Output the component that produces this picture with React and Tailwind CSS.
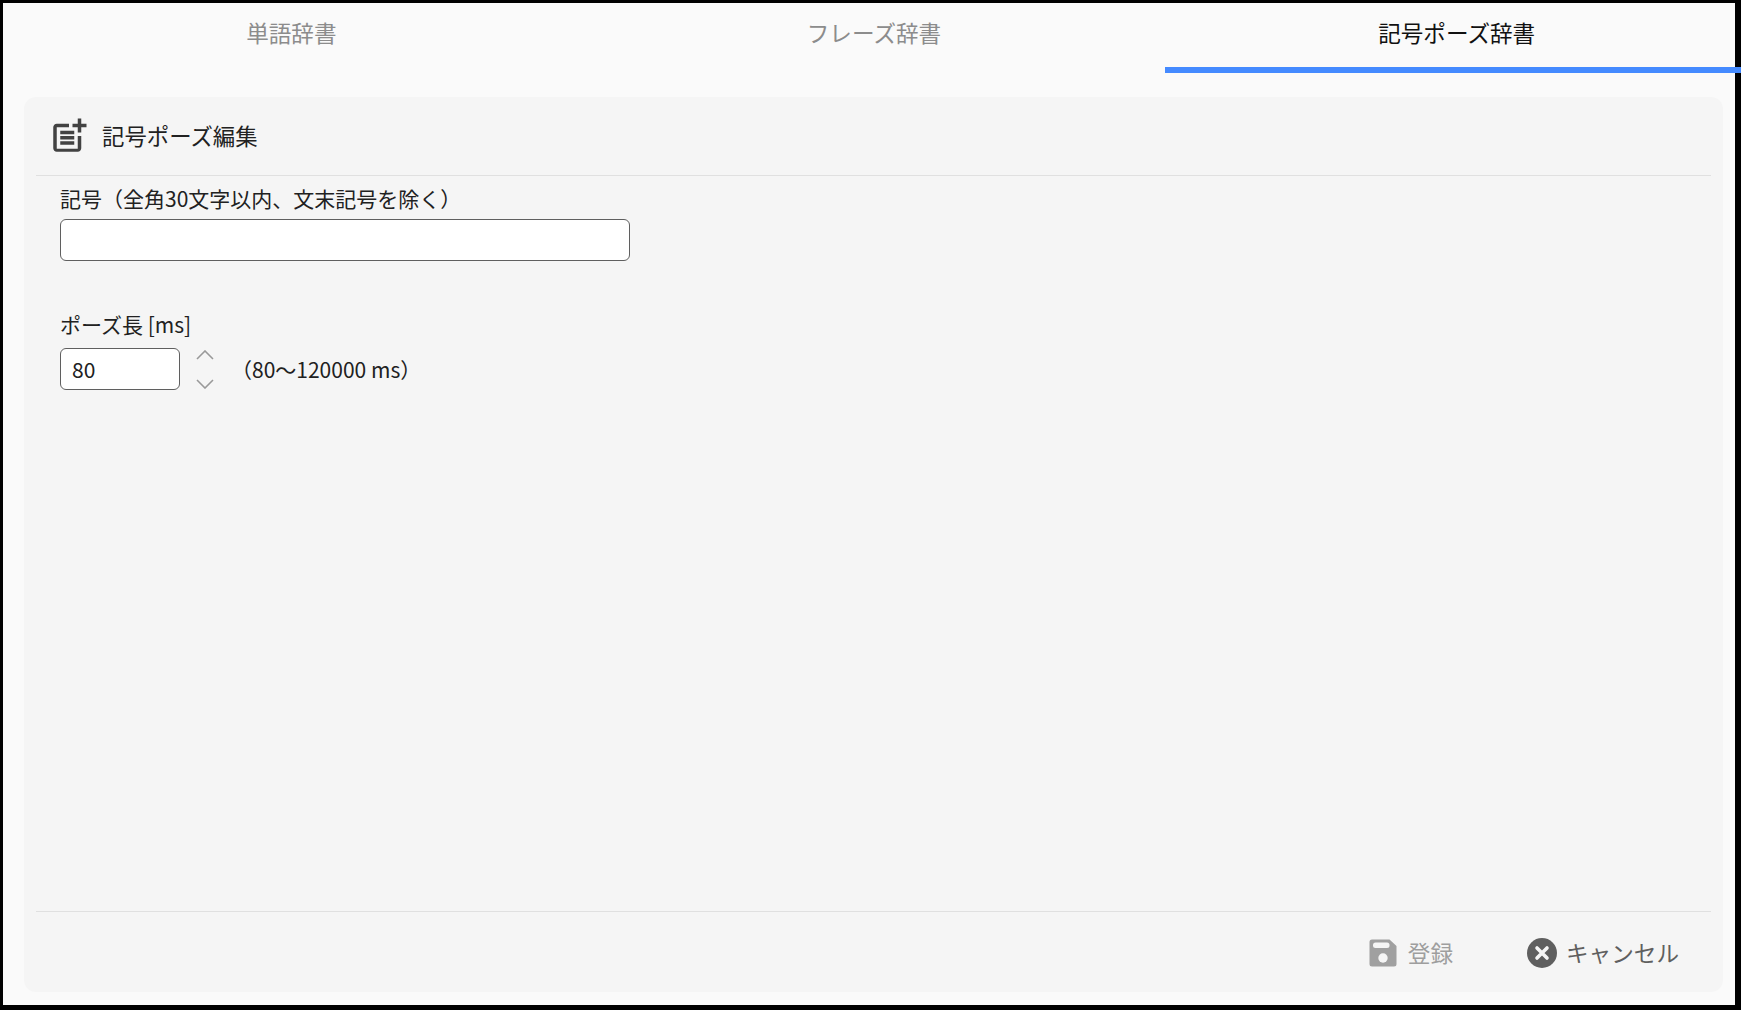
import { MdPostAdd } from "react-icons/md";

const TABS = [
  { label: "単語辞書", active: false },
  { label: "フレーズ辞書", active: false },
  { label: "記号ポーズ辞書", active: true },
];

function SaveIcon() {
  return (
    <svg width="28" height="28" viewBox="0 0 28 28" className="shrink-0">
      <path
        d="M3 0.5h17.5L27.5 7v18a2.5 2.5 0 0 1-2.5 2.5H3A2.5 2.5 0 0 1 0.5 25V3A2.5 2.5 0 0 1 3 0.5z"
        fill="#a0a0a0"
      />
      <rect x="4" y="3.5" width="16.5" height="5.5" rx="2.5" fill="#f5f5f5" />
      <circle cx="14" cy="19" r="4.7" fill="#f5f5f5" />
    </svg>
  );
}

function CancelIcon() {
  return (
    <svg width="30" height="30" viewBox="0 0 30 30" className="shrink-0">
      <circle cx="15" cy="15" r="15" fill="#5f5f5f" />
      <path
        d="M10 10l10 10M20 10L10 20"
        stroke="#f5f5f5"
        strokeWidth="3.6"
        strokeLinecap="round"
      />
    </svg>
  );
}

function Chevron({ down }) {
  return (
    <svg width="18" height="10" viewBox="0 0 18 10" fill="none">
      <path
        d={down ? "M1 1l8 8 8-8" : "M1 9l8-8 8 8"}
        stroke="#999999"
        strokeWidth="1.6"
      />
    </svg>
  );
}

export default function App() {
  return (
    <div className="h-[1010px] w-full overflow-hidden bg-black pt-[3px] pb-[5px] pl-[3px] pr-[6px] font-['Noto_Sans_CJK_JP',sans-serif]">
      <div className="flex h-full flex-col bg-[#fafafa]">
        {/* tabs */}
        <div className="-ml-[3px] flex h-[70px] w-[1748px] shrink-0">
          {TABS.map((tab) => (
            <div
              key={tab.label}
              className={`flex flex-1 justify-center border-b-[6px] pt-[14px] text-[22.6px] leading-[32px] ${
                tab.active
                  ? "border-[#448aff] text-[#111111]"
                  : "border-transparent text-[#8c8c8c]"
              }`}
            >
              {tab.label}
            </div>
          ))}
        </div>

        {/* panel */}
        <div className="mt-[24px] mb-[13px] ml-[21px] mr-[12px] flex min-h-0 flex-1 flex-col rounded-xl bg-[#f5f5f5] px-3">
          <div className="flex h-[79px] shrink-0 items-center gap-[12px] border-b border-[#e0e0e0] pb-[2px] pl-[12px]">
            <MdPostAdd size={42} className="mt-[1px] text-[#424242]" />
            <span className="text-[22.4px] leading-[32px] text-[#212121]">
              記号ポーズ編集
            </span>
          </div>

          <div className="flex-1 px-6 text-[21px] leading-[30px] text-[#212121]">
            <label className="mt-[7px] block">
              記号（全角30文字以内、文末記号を除く）
            </label>
            <div className="mt-[6px] h-[42px] w-[570px] rounded-[6px] border-[1.5px] border-[#5f5f5f] bg-white" />

            <label className="mt-[48px] block">ポーズ長 [ms]</label>
            <div className="mt-[9px] flex items-center">
              <div className="flex h-[42px] w-[120px] items-center rounded-[6px] border-[1.5px] border-[#5f5f5f] bg-white pl-[11px]">
                80
              </div>
              <div className="ml-[16px] flex h-[42px] w-[18px] flex-col items-center justify-between pt-[2px] pb-[1px]">
                <Chevron />
                <Chevron down />
              </div>
              <span className="ml-[17px]">（80〜120000 ms）</span>
            </div>
          </div>

          <div className="flex h-[81px] shrink-0 items-center justify-end gap-[74px] border-t border-[#e0e0e0] pt-[1px] pr-[32px] text-[22.6px] leading-[32px]">
            <div className="flex items-center gap-[11px] text-[#9e9e9e]">
              <SaveIcon />
              <span>登録</span>
            </div>
            <div className="flex items-center gap-[9px] text-[#5f5f5f]">
              <CancelIcon />
              <span>キャンセル</span>
            </div>
          </div>
        </div>
      </div>
    </div>
  );
}
